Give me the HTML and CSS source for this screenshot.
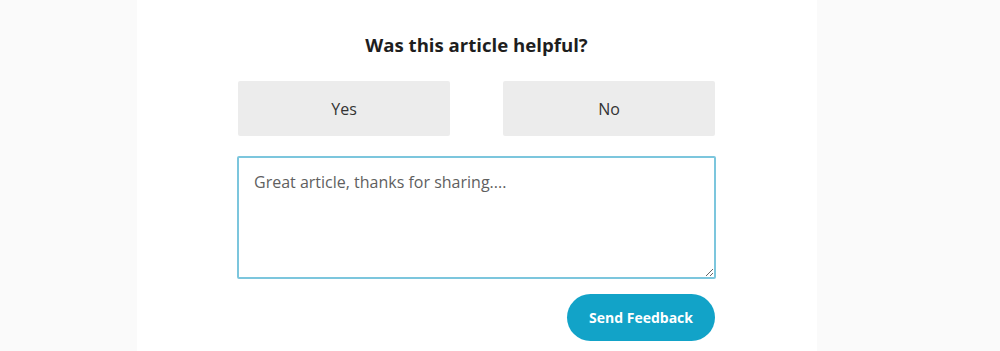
FILE: index.html
```html
<!DOCTYPE html>
<html lang="en">
<head>
<meta charset="utf-8">
<link rel="stylesheet" href="styles.css">
</head>
<body>
<div class="panel">
  <div class="feedback">
    <h2 class="title">Was this article helpful?</h2>
    <div class="choices">
      <button class="choice">Yes</button>
      <button class="choice">No</button>
    </div>
    <textarea class="comment">Great article, thanks for sharing....</textarea>
    <div class="actions">
      <button class="send">Send Feedback</button>
    </div>
  </div>
</div>
</body>
</html>
```
FILE: styles.css
```css
html, body {
  margin: 0;
  padding: 0;
  height: 100%;
}
body {
  background: #fafafa;
  font-family: "Open Sans", "Noto Sans", sans-serif;
  overflow: hidden;
}
.panel {
  width: 680px;
  margin-left: 137px;
  background: #ffffff;
  height: 100%;
}
.feedback {
  width: 477px;
  margin-left: 101px;
  padding-top: 30px;
}
.title {
  margin: 0;
  font-size: 18.6px;
  font-weight: 700;
  line-height: 30px;
  text-align: center;
  color: #1e1e1e;
}
.choices {
  display: flex;
  justify-content: space-between;
  margin-top: 21px;
}
.choice {
  width: 212px;
  height: 55px;
  border: none;
  border-radius: 2px;
  background: #ececec;
  font-family: inherit;
  font-size: 16px;
  color: #333333;
  padding: 0;
}
.comment {
  display: block;
  box-sizing: border-box;
  width: 479px;
  margin: 20px 0 0 -1px;
  height: 123px;
  border: 2px solid #7cc6dd;
  border-radius: 2px;
  padding: 12px 15px;
  font-family: inherit;
  font-size: 16px;
  line-height: 24px;
  color: #5f5f5f;
  outline: none;
  resize: both;
}
.actions {
  display: flex;
  justify-content: flex-end;
  margin-top: 15px;
}
.send {
  width: 148px;
  height: 47px;
  border: none;
  border-radius: 24px;
  background: #12a3c8;
  color: #ffffff;
  font-family: inherit;
  font-weight: 700;
  font-size: 14px;
  padding: 0;
}
```
